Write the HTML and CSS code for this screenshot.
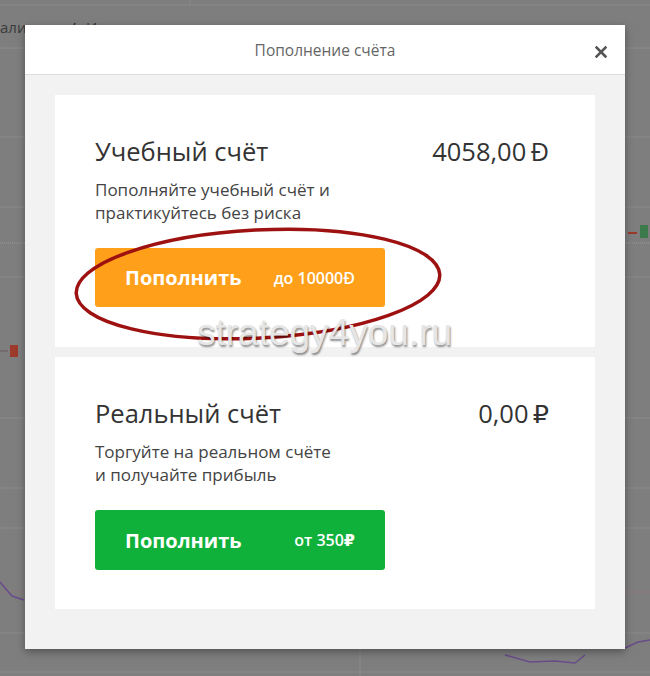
FILE: index.html
```html
<!DOCTYPE html>
<html lang="ru">
<head>
<meta charset="utf-8">
<title>Пополнение счёта</title>
<link rel="stylesheet" href="styles.css">
</head>
<body>
<svg class="chart" width="650" height="676" viewBox="0 0 650 676" aria-hidden="true">
  <rect x="0" y="0" width="650" height="676" fill="#7e7e7e"/>
  <line x1="0" y1="5" x2="650" y2="5" stroke="#888" stroke-width="1"/>
  <line x1="190" y1="0" x2="190" y2="5" stroke="#888"/>
  <line x1="0" y1="48" x2="650" y2="48" stroke="#8b8b8b"/>
  <g stroke="#8a8a8a" stroke-width="1">
    <line x1="0" y1="137" x2="650" y2="137"/>
    <line x1="0" y1="207" x2="650" y2="207"/>
    <line x1="0" y1="277" x2="650" y2="277"/>
    <line x1="0" y1="418" x2="650" y2="418"/>
    <line x1="0" y1="488" x2="650" y2="488"/>
    <line x1="0" y1="528" x2="650" y2="528"/>
    <line x1="0" y1="633" x2="650" y2="633"/>
    <line x1="0" y1="672" x2="650" y2="672"/>
    <line x1="360" y1="640" x2="360" y2="676"/>
  </g>
  <line x1="0" y1="592" x2="650" y2="592" stroke="#8c7a7a"/>
  <line x1="0" y1="243" x2="650" y2="243" stroke="#9a9a9a" stroke-dasharray="1 1"/>
  <rect x="10" y="345" width="8" height="12" fill="#9c3a2c"/>
  <line x1="0" y1="351" x2="8" y2="351" stroke="#6a5a5a"/>
  <line x1="628" y1="233" x2="637" y2="233" stroke="#9c3a2c" stroke-width="2"/>
  <rect x="640" y="225" width="8" height="13" fill="#3c7a4c"/>
  <polyline points="0,582 12,596 24,600" fill="none" stroke="#6a4c8a" stroke-width="1.5"/>
  <polyline points="505,655 530,662 555,661 575,663 585,655" fill="none" stroke="#6a4c8a" stroke-width="1.5"/>
  <polyline points="625,648 638,642 650,640" fill="none" stroke="#6a4c8a" stroke-width="1.5"/>
  <text x="0" y="33" class="bg-text">али</text>
  <text x="86" y="33" class="bg-text">Индикаторы</text>
  <path d="M66 32 l3 -5 l3 3 l3 -7" fill="none" stroke="#333" stroke-width="1.6"/>
</svg>

<div class="modal">
  <div class="modal-header">
    <span class="modal-title">Пополнение счёта</span>
    <button class="close" type="button" aria-label="Закрыть">
      <svg width="12" height="12" viewBox="0 0 12 12"><path d="M1.5 1.5 L10.5 10.5 M10.5 1.5 L1.5 10.5" stroke="#555" stroke-width="2.6" stroke-linecap="square"/></svg>
    </button>
  </div>
  <div class="modal-body">
    <div class="card">
      <div class="card-head">
        <h2 class="card-title">Учебный счёт</h2>
        <div class="amount">4058,00&#8201;Đ</div>
      </div>
      <p class="desc">Пополняйте учебный счёт и<br>практикуйтесь без риска</p>
      <a class="btn btn-orange" href="#"><span class="btn-main">Пополнить</span><span class="btn-sub">до 10000Đ</span></a>
    </div>
    <div class="card">
      <div class="card-head">
        <h2 class="card-title">Реальный счёт</h2>
        <div class="amount">0,00&#8201;₽</div>
      </div>
      <p class="desc">Торгуйте на реальном счёте<br>и получайте прибыль</p>
      <a class="btn btn-green" href="#"><span class="btn-main">Пополнить</span><span class="btn-sub">от 350₽</span></a>
    </div>
  </div>
</div>

<svg class="annotation" width="650" height="676" viewBox="0 0 650 676" aria-hidden="true">
  <ellipse cx="258" cy="284" rx="182" ry="54" transform="rotate(-3 258 284)" fill="none" stroke="#9e1111" stroke-width="3.5"/>
</svg>
<div class="watermark">strategy4you.ru</div>
</body>
</html>
```
FILE: styles.css
```css
html, body {
  margin: 0;
  padding: 0;
}
body {
  width: 650px;
  height: 676px;
  position: relative;
  overflow: hidden;
  font-family: "Open Sans", "DejaVu Sans", sans-serif;
  color: #333;
  padding-top: 25px;
  box-sizing: border-box;
}
.chart {
  position: absolute;
  left: 0;
  top: 0;
}
.bg-text {
  font-family: "Open Sans", sans-serif;
  font-size: 15px;
  fill: #3a3a3a;
}
.modal {
  position: relative;
  width: 600px;
  margin: 0 auto;
  background: #f2f2f2;
  box-shadow: 0 3px 8px rgba(0, 0, 0, 0.35);
}
.modal-header {
  position: relative;
  height: 49px;
  background: #fff;
  border-bottom: 1px solid #dcdcdc;
  display: flex;
  align-items: center;
  justify-content: center;
}
.modal-title {
  font-size: 15.5px;
  color: #666;
}
.close {
  position: absolute;
  right: 18px;
  top: 21px;
  width: 12px;
  height: 12px;
  padding: 0;
  border: 0;
  background: none;
  display: flex;
}
.modal-body {
  padding: 20px 30px 40px;
  display: flex;
  flex-direction: column;
  gap: 10px;
}
.card {
  background: #fff;
  padding: 40px 46px 40px 40px;
  display: flex;
  flex-direction: column;
}
.card + .card {
  padding-bottom: 39px;
}
.card-head {
  display: flex;
  justify-content: space-between;
  align-items: center;
  height: 31px;
}
.card-title {
  margin: 0;
  font-size: 25.5px;
  font-weight: 400;
  color: #333;
}
.amount {
  font-size: 25.5px;
  color: #333;
}
.desc {
  margin: 12px 0 24px;
  font-size: 17px;
  line-height: 23px;
  color: #444;
}
.btn {
  width: 290px;
  height: 59px;
  box-sizing: border-box;
  padding: 0 30px;
  border-radius: 3px;
  display: flex;
  align-items: center;
  justify-content: space-between;
  color: #fff;
  text-decoration: none;
}
.btn-green {
  height: 60px;
}
.btn-orange {
  background: #ff9f1a;
}
.btn-green {
  background: #0fb13b;
}
.btn-main {
  font-size: 20px;
  font-weight: 700;
}
.btn-sub {
  font-size: 16px;
  font-weight: 600;
}
.annotation {
  position: absolute;
  left: 0;
  top: 0;
  pointer-events: none;
}
.watermark {
  position: absolute;
  left: 197px;
  top: 312px;
  font-family: "Liberation Sans", Arial, sans-serif;
  font-size: 37px;
  color: #e6e6e6;
  text-shadow: 1px 2px 2px rgba(0, 0, 0, 0.45);
  pointer-events: none;
}
```
